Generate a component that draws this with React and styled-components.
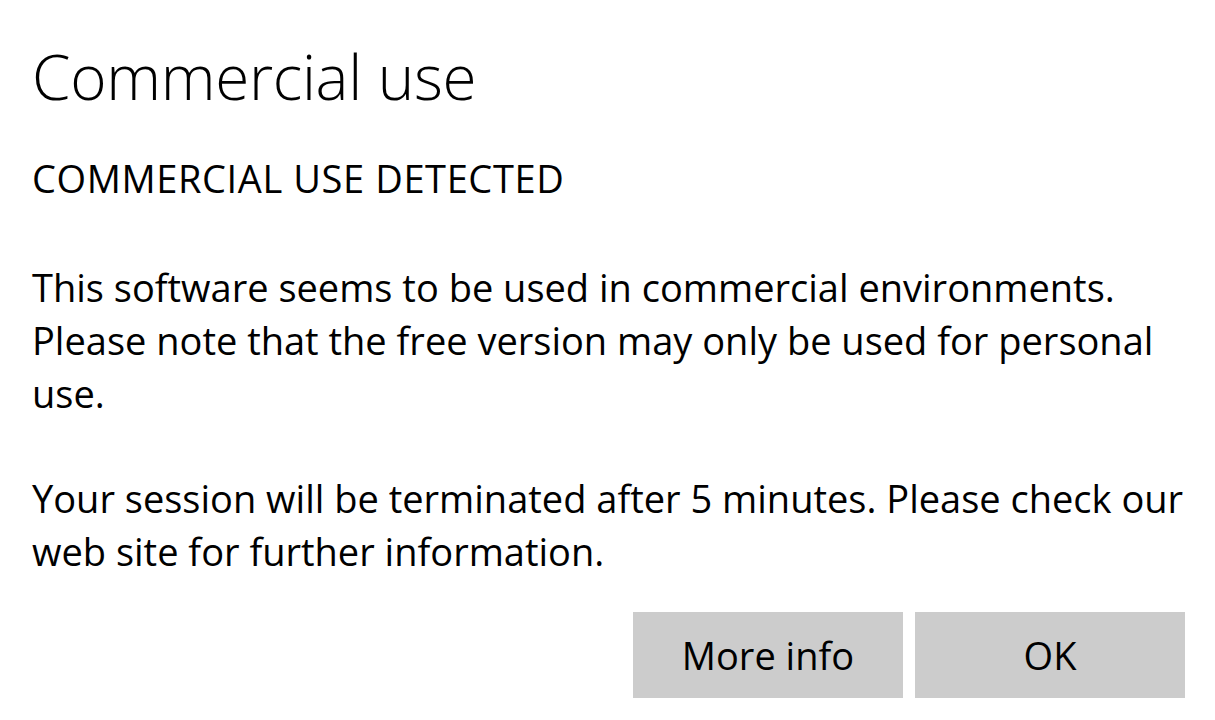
import styled, { createGlobalStyle } from 'styled-components';

const GlobalStyle = createGlobalStyle`
  html, body {
    margin: 0;
    padding: 0;
    background: #ffffff;
  }
  body {
    font-family: "Open Sans", "Noto Sans", "Liberation Sans", sans-serif;
    color: #000000;
  }
`;

const Dialog = styled.div`
  width: 1153px;
  padding: 41px 30px 0 32px;
`;

const Title = styled.h1`
  margin: 0;
  font-size: 62px;
  font-weight: 300;
  line-height: 70px;
  letter-spacing: -0.3px;
`;

const Text = styled.p`
  margin: ${p => p.$gap}px 0 0;
  font-size: 38px;
  font-weight: 400;
  line-height: 53px;
  letter-spacing: ${p => (p.$caps ? '0.6px' : '0')};
`;

const Actions = styled.div`
  display: flex;
  justify-content: flex-end;
  gap: 12px;
  margin-top: 34px;
`;

const Button = styled.button`
  width: 270px;
  height: 86px;
  border: none;
  border-radius: 0;
  background: #cccccc;
  color: #000000;
  font-family: inherit;
  font-size: 38px;
  padding: 0;
  cursor: pointer;
  display: flex;
  align-items: center;
  justify-content: center;

  &:hover {
    background: #bfbfbf;
  }
`;

export default function App() {
  return (
    <>
      <GlobalStyle />
      <Dialog>
        <Title>Commercial use</Title>
        <Text $gap={41} $caps>COMMERCIAL USE DETECTED</Text>
        <Text $gap={56}>
          This software seems to be used in commercial environments. Please note
          that the free version may only be used for personal use.
        </Text>
        <Text $gap={52}>
          Your session will be terminated after 5 minutes. Please check our web
          site for further information.
        </Text>
        <Actions>
          <Button>More info</Button>
          <Button>OK</Button>
        </Actions>
      </Dialog>
    </>
  );
}
